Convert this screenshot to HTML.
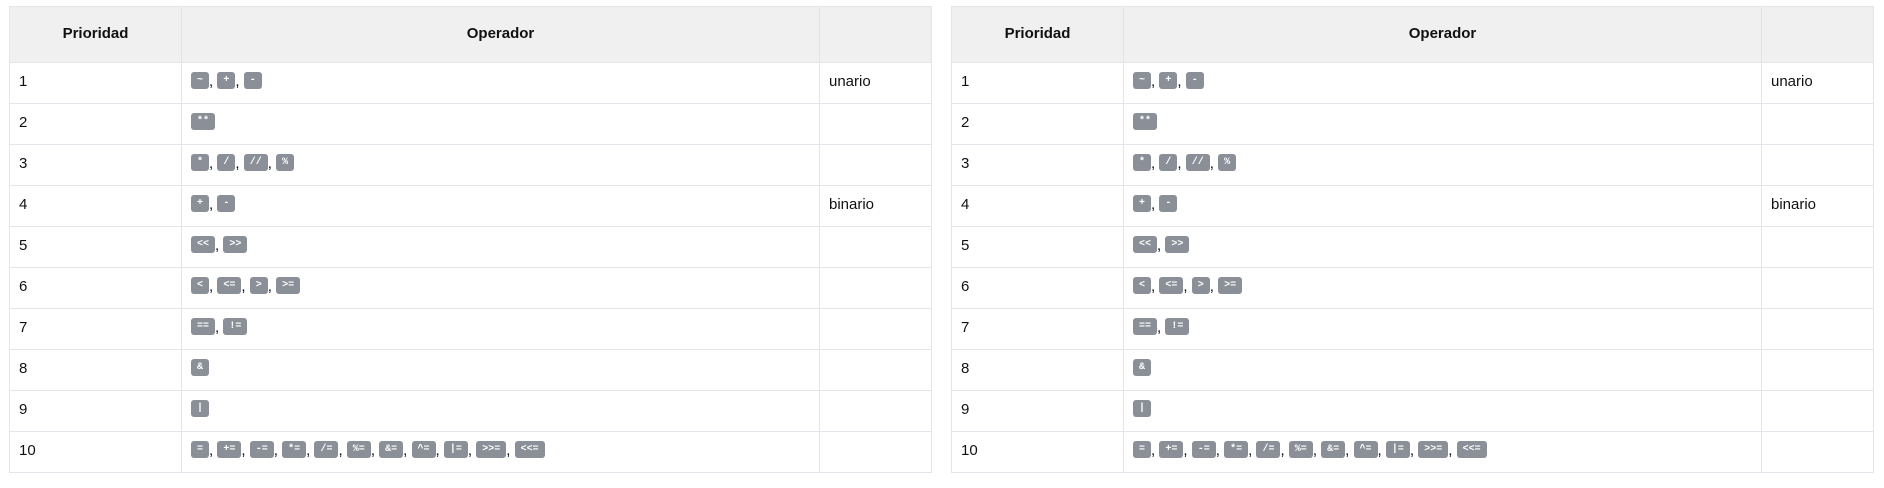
<!DOCTYPE html>
<html><head><meta charset="utf-8"><style>
body{margin:0;background:#fff;font-family:"Liberation Sans",sans-serif;}
table{position:absolute;top:6px;border-collapse:collapse;table-layout:fixed;width:922px;}
td,th{border:1px solid #e2e5ea;padding:0 9px 3px;font-size:15px;color:#111;text-align:left;height:41px;box-sizing:border-box}
th{background:#f0f0f0;height:56px;text-align:center;font-weight:bold;font-size:15px}
code{display:inline-block;background:#8b8f98;color:#fff;font-family:"Liberation Mono",monospace;font-weight:bold;font-size:10px;line-height:17px;height:17px;padding:0 6px;border-radius:3px;vertical-align:middle;margin-top:-3px}
</style></head><body>
<table style="left:9px"><colgroup><col style="width:172px"><col style="width:638px"><col style="width:112px"></colgroup>
<tr><th>Prioridad</th><th>Operador</th><th></th></tr>
<tr><td>1</td><td><code>~</code>, <code>+</code>, <code>-</code></td><td>unario</td></tr>
<tr><td>2</td><td><code>**</code></td><td></td></tr>
<tr><td>3</td><td><code>*</code>, <code>/</code>, <code>//</code>, <code>%</code></td><td></td></tr>
<tr><td>4</td><td><code>+</code>, <code>-</code></td><td>binario</td></tr>
<tr><td>5</td><td><code>&lt;&lt;</code>, <code>&gt;&gt;</code></td><td></td></tr>
<tr><td>6</td><td><code>&lt;</code>, <code>&lt;=</code>, <code>&gt;</code>, <code>&gt;=</code></td><td></td></tr>
<tr><td>7</td><td><code>==</code>, <code>!=</code></td><td></td></tr>
<tr><td>8</td><td><code>&amp;</code></td><td></td></tr>
<tr><td>9</td><td><code>|</code></td><td></td></tr>
<tr><td>10</td><td><code>=</code>, <code>+=</code>, <code>-=</code>, <code>*=</code>, <code>/=</code>, <code>%=</code>, <code>&amp;=</code>, <code>^=</code>, <code>|=</code>, <code>&gt;&gt;=</code>, <code>&lt;&lt;=</code></td><td></td></tr>
</table>
<table style="left:951px"><colgroup><col style="width:172px"><col style="width:638px"><col style="width:112px"></colgroup>
<tr><th>Prioridad</th><th>Operador</th><th></th></tr>
<tr><td>1</td><td><code>~</code>, <code>+</code>, <code>-</code></td><td>unario</td></tr>
<tr><td>2</td><td><code>**</code></td><td></td></tr>
<tr><td>3</td><td><code>*</code>, <code>/</code>, <code>//</code>, <code>%</code></td><td></td></tr>
<tr><td>4</td><td><code>+</code>, <code>-</code></td><td>binario</td></tr>
<tr><td>5</td><td><code>&lt;&lt;</code>, <code>&gt;&gt;</code></td><td></td></tr>
<tr><td>6</td><td><code>&lt;</code>, <code>&lt;=</code>, <code>&gt;</code>, <code>&gt;=</code></td><td></td></tr>
<tr><td>7</td><td><code>==</code>, <code>!=</code></td><td></td></tr>
<tr><td>8</td><td><code>&amp;</code></td><td></td></tr>
<tr><td>9</td><td><code>|</code></td><td></td></tr>
<tr><td>10</td><td><code>=</code>, <code>+=</code>, <code>-=</code>, <code>*=</code>, <code>/=</code>, <code>%=</code>, <code>&amp;=</code>, <code>^=</code>, <code>|=</code>, <code>&gt;&gt;=</code>, <code>&lt;&lt;=</code></td><td></td></tr>
</table>
</body></html>
